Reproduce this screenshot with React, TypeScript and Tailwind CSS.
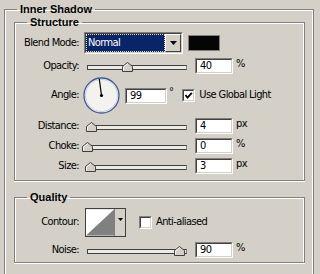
import React from 'react';

const etched = 'border border-[#808080] shadow-[inset_1px_1px_0_#fff,inset_-1px_0_0_#fff,0_1px_0_#fff]';

const Field = ({ value }: { value: string }) => (
  <div className="h-[16px] w-[38px] border border-t-[#808080] border-l-[#808080] border-b-white border-r-white">
    <div className="h-full w-full border border-t-[#404040] border-l-[#404040] border-b-[#d4d0c8] border-r-[#d4d0c8] bg-white pl-[3px] leading-[12px]">
      {value}
    </div>
  </div>
);

const Thumb = () => (
  <svg width="11" height="10" viewBox="0 0 11 10">
    <path d="M0.5 9.5 V4.5 L5.5 0.5 L10.5 4.5 V9.5 Z" fill="#d4d0c8" stroke="#404040" />
    <path d="M1.5 8.5 V5 L5.5 1.8" fill="none" stroke="#fff" />
  </svg>
);

const Slider = ({ pct }: { pct: number }) => (
  <div className="relative h-[16px] w-[100px] pt-[7px]">
    <div className="h-[5px] border border-t-[#404040] border-l-[#404040] border-b-[#404040] border-r-[#808080] bg-[#ecebe6]" />
    <div className="absolute top-[4px]" style={{ left: `calc(${pct}% - 5px)` }}>
      <Thumb />
    </div>
  </div>
);

const Check = ({ checked }: { checked: boolean }) => (
  <div className="h-[13px] w-[13px] border border-t-[#808080] border-l-[#808080] border-b-white border-r-white">
    <div className="h-full w-full border border-t-[#404040] border-l-[#404040] border-b-[#d4d0c8] border-r-[#d4d0c8] bg-white">
      {checked && (
        <svg width="9" height="9" viewBox="0 0 9 9">
          <path d="M1.5 4 L3.5 6.5 L7.8 1.8" fill="none" stroke="#000" strokeWidth="1.8" />
        </svg>
      )}
    </div>
  </div>
);

const Label = ({ children }: { children: React.ReactNode }) => (
  <div className="w-[64px] shrink-0 text-right">{children}</div>
);

const Arrow = () => (
  <svg width="7" height="4" viewBox="0 0 7 4">
    <path d="M0 0 H7 L3.5 4 Z" fill="#000" />
  </svg>
);

const SliderRow = ({ label, pct, value, unit, className }: { label: string; pct: number; value: string; unit: string; className: string }) => (
  <div className={`flex h-[16px] items-center ${className}`}>
    <Label>{label}</Label>
    <div className="ml-[8px]">
      <Slider pct={pct} />
    </div>
    <div className="ml-[8px]">
      <Field value={value} />
    </div>
    <span className="ml-[3px] self-start leading-[12px]">{unit}</span>
  </div>
);

export default function App() {
  return (
    <div className="h-[274px] w-[320px] overflow-hidden bg-[#d4d0c8] pt-[3px] pl-[4px] font-['DejaVu_Sans_Condensed','Liberation_Sans',sans-serif] text-[11px] tracking-[-0.6px] text-black">
      <fieldset className={`w-[310px] pl-[9px] pr-[8px] pb-[20px] ${etched}`}>
        <legend className="ml-[3px] px-[3px] font-['Liberation_Sans',Arial,sans-serif] text-[11px] font-bold leading-[13px] tracking-normal">Inner Shadow</legend>

        <fieldset className={`w-[291px] pb-[6px] ${etched}`}>
          <legend className="ml-[12px] px-[3px] font-['Liberation_Sans',Arial,sans-serif] font-bold leading-[13px] tracking-normal">Structure</legend>

          <div className="mt-[3px] flex h-[22px] items-center">
            <Label>Blend Mode:</Label>
            <div className="ml-[5px] flex h-[22px] w-[99px] border border-t-[#808080] border-l-[#808080] border-b-white border-r-white">
              <div className="flex flex-1 border border-t-[#404040] border-l-[#404040] border-b-[#d4d0c8] border-r-[#d4d0c8]">
                <div className="flex flex-1 items-center border border-dotted border-[#e6dc9a] bg-[#0a246a] pl-[1px] text-white">Normal</div>
                <div className="flex w-[16px] items-center justify-center border border-t-white border-l-white border-b-[#404040] border-r-[#404040] bg-[#d4d0c8]">
                  <Arrow />
                </div>
              </div>
            </div>
            <div className="ml-[5px] h-[16px] w-[32px] border border-[#808080] bg-[#050505]" />
          </div>

          <SliderRow label="Opacity:" pct={40} value="40" unit="%" className="mt-[4px]" />

          <div className="mt-[3px] flex h-[37px] items-center">
            <Label>Angle:</Label>
            <svg className="ml-[4px]" width="37" height="37" viewBox="0 0 37 37">
              <circle cx="18.5" cy="18.5" r="17.5" fill="#f3f2ee" stroke="#3f5a8f" strokeWidth="1.3" />
              <circle cx="18.5" cy="18.5" r="16.2" fill="none" stroke="#b9c3d8" strokeWidth="0.8" />
              <line x1="18.5" y1="18.5" x2="16.3" y2="2" stroke="#000" strokeWidth="1.2" />
              <circle cx="18.5" cy="18.5" r="1.6" fill="#000" />
            </svg>
            <div className="ml-[5px] h-[16px] w-[42px] border border-t-[#808080] border-l-[#808080] border-b-white border-r-white">
              <div className="h-full w-full border border-t-[#404040] border-l-[#404040] border-b-[#d4d0c8] border-r-[#d4d0c8] bg-white pl-[3px] leading-[12px]">99</div>
            </div>
            <span className="ml-[2px] mt-[10px] self-start leading-[10px]">°</span>
            <div className="ml-[9px]">
              <Check checked />
            </div>
            <span className="ml-[4px]">Use Global Light</span>
          </div>

          <SliderRow label="Distance:" pct={4} value="4" unit="px" className="mt-[4px]" />
          <SliderRow label="Choke:" pct={0} value="0" unit="%" className="mt-[4px]" />
          <SliderRow label="Size:" pct={3} value="3" unit="px" className="mt-[4px]" />
        </fieldset>

        <fieldset className={`mt-[10px] w-[291px] pb-[4px] ${etched}`}>
          <legend className="ml-[12px] px-[3px] font-['Liberation_Sans',Arial,sans-serif] font-bold leading-[13px] tracking-normal">Quality</legend>

          <div className="mt-[4px] flex h-[29px] items-center">
            <Label>Contour:</Label>
            <div className="ml-[6px] flex h-[29px] w-[41px] border border-[#404040] bg-[#d4d0c8]">
              <svg width="29" height="27" viewBox="0 0 29 27" className="border-r border-[#808080]">
                <rect width="29" height="27" fill="#fff" />
                <path d="M0 27 L29 0 V27 Z" fill="#808080" />
              </svg>
              <div className="flex flex-1 justify-center pt-[9px]">
                <svg width="5" height="3" viewBox="0 0 5 3">
                  <path d="M0 0 H5 L2.5 3 Z" fill="#000" />
                </svg>
              </div>
            </div>
            <div className="ml-[13px]">
              <Check checked={false} />
            </div>
            <span className="ml-[4px]">Anti-aliased</span>
          </div>

          <SliderRow label="Noise:" pct={92} value="90" unit="%" className="mt-[5px]" />
        </fieldset>
      </fieldset>
    </div>
  );
}
